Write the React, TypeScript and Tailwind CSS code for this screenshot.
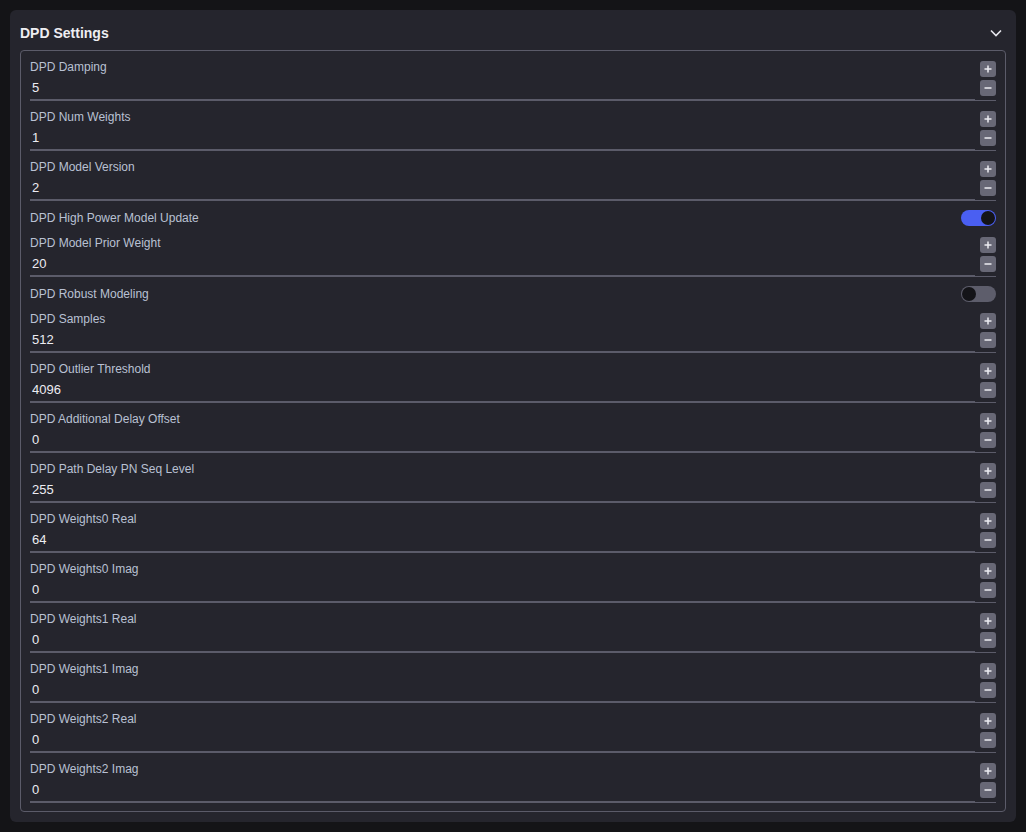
import React, { useState } from "react";

type Field =
  | { kind: "number"; label: string; value: number }
  | { kind: "toggle"; label: string; value: boolean };

const fields: Field[] = [
  { kind: "number", label: "DPD Damping", value: 5 },
  { kind: "number", label: "DPD Num Weights", value: 1 },
  { kind: "number", label: "DPD Model Version", value: 2 },
  { kind: "toggle", label: "DPD High Power Model Update", value: true },
  { kind: "number", label: "DPD Model Prior Weight", value: 20 },
  { kind: "toggle", label: "DPD Robust Modeling", value: false },
  { kind: "number", label: "DPD Samples", value: 512 },
  { kind: "number", label: "DPD Outlier Threshold", value: 4096 },
  { kind: "number", label: "DPD Additional Delay Offset", value: 0 },
  { kind: "number", label: "DPD Path Delay PN Seq Level", value: 255 },
  { kind: "number", label: "DPD Weights0 Real", value: 64 },
  { kind: "number", label: "DPD Weights0 Imag", value: 0 },
  { kind: "number", label: "DPD Weights1 Real", value: 0 },
  { kind: "number", label: "DPD Weights1 Imag", value: 0 },
  { kind: "number", label: "DPD Weights2 Real", value: 0 },
  { kind: "number", label: "DPD Weights2 Imag", value: 0 },
];

function NumberRow({ label, value }: { label: string; value: number }) {
  const [v, setV] = useState(value);
  return (
    <div className="flex items-end border-b border-[#5b5b69]">
      <div className="flex-1 pt-2 border-b border-[#5b5b69]">
        <div className="text-[12px] leading-4 text-[#b9c1d3]">{label}</div>
        <div className="h-6 flex items-center pt-[2px] pl-[2px] text-[13px] text-[#ececf2]">{v}</div>
      </div>
      <div className="ml-[5px] flex flex-col gap-[3px] pb-[4px] w-4">
        <button
          onClick={() => setV(v + 1)}
          className="w-4 h-4 rounded-[3px] bg-[#686876] flex items-center justify-center"
        >
          <svg width="10" height="10" viewBox="0 0 10 10">
            <path d="M5 1.5v7M1.5 5h7" stroke="#ececf2" strokeWidth="1.5" />
          </svg>
        </button>
        <button
          onClick={() => setV(v - 1)}
          className="w-4 h-4 rounded-[3px] bg-[#686876] flex items-center justify-center"
        >
          <svg width="10" height="10" viewBox="0 0 10 10">
            <path d="M1.5 5h7" stroke="#ececf2" strokeWidth="1.5" />
          </svg>
        </button>
      </div>
    </div>
  );
}

function ToggleRow({ label, value }: { label: string; value: boolean }) {
  const [on, setOn] = useState(value);
  return (
    <div className="flex items-center justify-between pt-[9px] pb-px">
      <div className="text-[12px] leading-4 text-[#b9c1d3]">{label}</div>
      <button
        onClick={() => setOn(!on)}
        className={
          on
            ? "w-[35px] h-4 rounded-full bg-[#4a5ff2] flex items-center justify-end px-px"
            : "w-[35px] h-4 rounded-full bg-[#5d5d6b] flex items-center justify-start px-px"
        }
      >
        <span className="w-[14px] h-[14px] rounded-full bg-[#141418]" />
      </button>
    </div>
  );
}

export default function App() {
  return (
    <div
      className="min-h-screen bg-[#141417] p-[10px]"
      style={{ fontFamily: '"Liberation Sans", Arial, sans-serif' }}
    >
      <div className="bg-[#25252d] rounded-md px-[10px] pb-[10px]">
        <div className="h-10 flex items-center justify-between pt-[6px]">
          <div className="text-[14px] font-bold text-[#eeeef2]">DPD Settings</div>
          <svg width="14" height="14" viewBox="0 0 14 14" className="mr-[3px]">
            <path d="M2 4.5l5 5 5-5" fill="none" stroke="#e6e6ec" strokeWidth="1.6" />
          </svg>
        </div>
        <div className="border border-[#5b5b69] rounded-[4px] px-[9px] pb-[8px]">
          {fields.map((f) =>
            f.kind === "number" ? (
              <NumberRow key={f.label} label={f.label} value={f.value} />
            ) : (
              <ToggleRow key={f.label} label={f.label} value={f.value} />
            )
          )}
        </div>
      </div>
    </div>
  );
}
